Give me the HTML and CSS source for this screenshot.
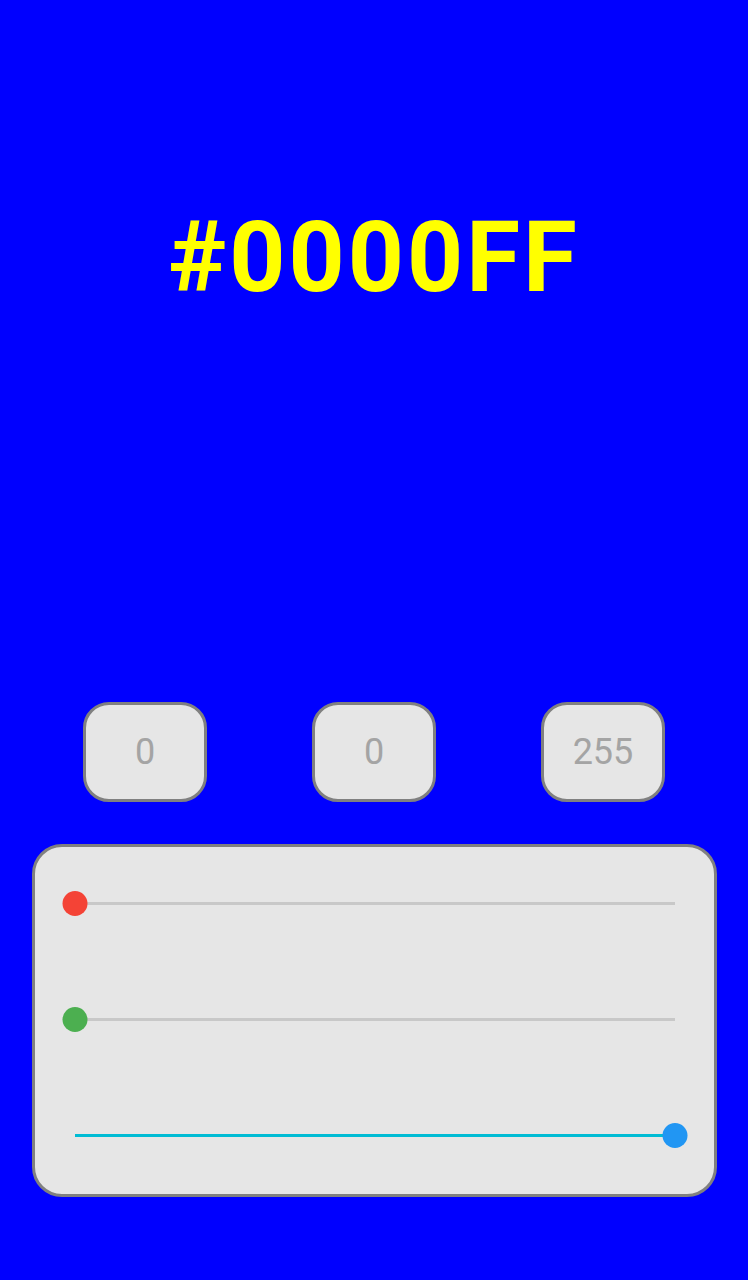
FILE: index.html
```html
<!DOCTYPE html>
<html lang="en">
<head>
<meta charset="utf-8">
<title>Color Picker</title>
<link rel="stylesheet" href="styles.css">
</head>
<body>
<main class="screen">
  <h1 class="hex">#0000FF</h1>
  <div class="values">
    <div class="value-box">0</div>
    <div class="value-box">0</div>
    <div class="value-box">255</div>
  </div>
  <section class="panel">
    <div class="slider">
      <div class="track"><div class="fill" style="width:0%"></div></div>
      <div class="thumb thumb-red" style="left:0%"></div>
    </div>
    <div class="slider">
      <div class="track"><div class="fill" style="width:0%"></div></div>
      <div class="thumb thumb-green" style="left:0%"></div>
    </div>
    <div class="slider">
      <div class="track"><div class="fill" style="width:100%"></div></div>
      <div class="thumb thumb-blue" style="left:100%"></div>
    </div>
  </section>
</main>
</body>
</html>
```

FILE: styles.css
```css
html, body {
  margin: 0;
  padding: 0;
  background: #0000ff;
}

.screen {
  width: 748px;
  height: 1280px;
  display: flex;
  flex-direction: column;
  font-family: Roboto, "Liberation Sans", sans-serif;
}

.hex {
  margin: 0;
  padding-top: 209px;
  height: 98px;
  font-size: 98px;
  line-height: 98px;
  font-weight: 700;
  letter-spacing: 3px;
  color: #ffff00;
  text-align: center;
}

.values {
  margin-top: 395px;
  padding: 0 83px;
  display: flex;
  justify-content: space-between;
}

.value-box {
  box-sizing: border-box;
  width: 124px;
  height: 100px;
  border: 3px solid #808080;
  border-radius: 26px;
  background: #e6e6e6;
  color: #a4a4a4;
  font-size: 36px;
  display: flex;
  align-items: center;
  justify-content: center;
}

.panel {
  box-sizing: border-box;
  margin: 42px 0 0 32px;
  width: 685px;
  height: 353px;
  border: 3px solid #808080;
  border-radius: 30px;
  background: #e6e6e6;
  padding: 44px 39px 46px 40px;
  display: flex;
  flex-direction: column;
  gap: 91px;
}

.slider {
  position: relative;
  height: 25px;
  display: flex;
  align-items: center;
}

.track {
  flex: 1;
  height: 3px;
  background: #c8c8c8;
  display: flex;
}

.fill {
  height: 100%;
  background: #00bcd4;
}

.thumb {
  position: absolute;
  top: 0;
  width: 25px;
  height: 25px;
  border-radius: 50%;
  transform: translateX(-50%);
}

.thumb-red { background: #f44336; }
.thumb-green { background: #4caf50; }
.thumb-blue { background: #2196f3; }
```
